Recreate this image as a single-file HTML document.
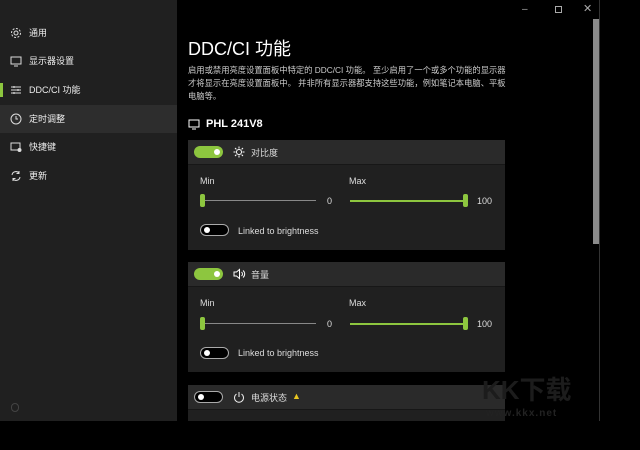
<!DOCTYPE html>
<html><head><meta charset="utf-8"><style>
*{margin:0;padding:0;box-sizing:border-box}
body{width:640px;height:450px;background:#000;position:relative;overflow:hidden;font-family:"Liberation Sans","Noto Sans CJK SC",sans-serif;color:#fff}
.a{position:absolute}
#side{left:0;top:0;width:177px;height:421px;background:#202020}
.it{position:absolute;left:0;width:177px;height:28px;font-size:9px;color:#eee;line-height:28px;padding-left:29px}
.it svg{position:absolute;left:10px;top:8px}
#main{left:177px;top:0;width:423px;height:421px;background:#000;border-right:1px solid #333}
.card{position:absolute;left:188px;width:317px;background:#202020}
.hd{height:25px;background:#2a2a2a;border-bottom:1px solid #171717;position:relative}
.tg{position:absolute;width:29px;height:12px;border-radius:6px}
.on{background:#8dc63f}
.on:after{content:"";position:absolute;right:3px;top:3px;width:6px;height:6px;border-radius:50%;background:#fff}
.off{border:1px solid #aaa;background:#000}
.off:after{content:"";position:absolute;left:3px;top:2px;width:6px;height:6px;border-radius:50%;background:#fff}
.lbl{position:absolute;font-size:9px;color:#ddd}
.tr{position:absolute;height:1px;background:#888}
.trg{position:absolute;height:2px;background:#8dc63f}
.th{position:absolute;width:5px;height:13px;border-radius:2px;background:#8dc63f}
</style></head><body>
<div class="a" id="side">
<div class="it" style="top:19px"><svg width="12" height="12" viewBox="0 0 12 12"><circle cx="6" cy="6" r="2" fill="none" stroke="#ddd"/><circle cx="6" cy="6" r="4.5" fill="none" stroke="#ddd" stroke-dasharray="2 1.5"/></svg>通用</div>
<div class="it" style="top:47px"><svg width="12" height="12" viewBox="0 0 12 12"><rect x="1" y="2" width="10" height="7" fill="none" stroke="#ddd"/><path d="M4 11h4" stroke="#ddd"/></svg>显示器设置</div>
<div class="a" style="left:0;top:83px;width:3px;height:14px;background:#8dc63f"></div>
<div class="it" style="top:76px"><svg width="12" height="12" viewBox="0 0 12 12"><path d="M1 3h10M1 6h10M1 9h10" stroke="#ddd"/><path d="M4 2v2M8 5v2M4 8v2" stroke="#ddd"/></svg>DDC/CI 功能</div>
<div class="it" style="top:105px;background:#2d2d2d"><svg width="12" height="12" viewBox="0 0 12 12"><circle cx="6" cy="6" r="5" fill="none" stroke="#ddd"/><path d="M6 3v3h2" fill="none" stroke="#ddd"/></svg>定时调整</div>
<div class="it" style="top:133px"><svg width="12" height="12" viewBox="0 0 12 12"><rect x="1" y="2" width="9" height="7" fill="none" stroke="#ddd"/><circle cx="9.5" cy="9" r="2" fill="#ddd"/></svg>快捷键</div>
<div class="it" style="top:162px"><svg width="12" height="12" viewBox="0 0 12 12"><path d="M2 5a4 4 0 0 1 7-2M10 7a4 4 0 0 1-7 2" fill="none" stroke="#ddd"/><path d="M9 1v2.5H6.5M3 11V8.5h2.5" fill="none" stroke="#ddd"/></svg>更新</div>
<div class="a" style="left:11px;top:403px;width:8px;height:9px;border:1px solid #444;border-radius:4px"></div>
</div>
<div class="a" id="main"></div>
<div class="a" style="left:522px;top:4px;font-size:10px;color:#aaa">–</div>
<div class="a" style="left:555px;top:6px;width:7px;height:7px;border:1px solid #aaa"></div>
<div class="a" style="left:583px;top:2px;font-size:11px;color:#aaa">✕</div>
<div class="a" style="left:593px;top:19px;width:6px;height:225px;background:#8a8a8a"></div>
<div class="a" style="left:188px;top:35px;font-size:18px">DDC/CI 功能</div>
<div class="a" style="left:188px;top:64px;width:320px;font-size:8.3px;line-height:13px;color:#ccc">启用或禁用亮度设置面板中特定的 DDC/CI 功能。 至少启用了一个或多个功能的显示器才将显示在亮度设置面板中。 并非所有显示器都支持这些功能，例如笔记本电脑、平板电脑等。</div>
<svg class="a" style="left:188px;top:119px" width="12" height="11" viewBox="0 0 12 11"><rect x="1" y="1" width="10" height="7" fill="none" stroke="#fff"/><path d="M4 10h4" stroke="#fff"/></svg>
<div class="a" style="left:206px;top:118px;font-size:11px;font-weight:bold">PHL 241V8</div>

<div class="card" style="top:140px;height:110px">
<div class="hd"><div class="tg on" style="left:6px;top:6px"></div><svg class="a" style="left:45px;top:6px" width="12" height="12" viewBox="0 0 12 12"><circle cx="6" cy="6" r="2.5" fill="none" stroke="#fff"/><path d="M6 0.5v2M6 9.5v2M0.5 6h2M9.5 6h2M2 2l1.4 1.4M8.6 8.6L10 10M2 10l1.4-1.4M8.6 3.4L10 2" stroke="#fff"/></svg><div class="lbl" style="left:63px;top:6px">对比度</div></div>
<div class="lbl" style="left:12px;top:36px">Min</div><div class="lbl" style="left:161px;top:36px">Max</div>
<div class="tr" style="left:16px;top:60px;width:112px"></div><div class="th" style="left:12px;top:54px"></div><div class="lbl" style="left:139px;top:56px">0</div>
<div class="trg" style="left:162px;top:60px;width:115px"></div><div class="th" style="left:275px;top:54px"></div><div class="lbl" style="left:289px;top:56px">100</div>
<div class="tg off" style="left:12px;top:84px"></div><div class="lbl" style="left:50px;top:86px">Linked to brightness</div>
</div>

<div class="card" style="top:262px;height:110px">
<div class="hd"><div class="tg on" style="left:6px;top:6px"></div><svg class="a" style="left:45px;top:6px" width="13" height="12" viewBox="0 0 13 12"><path d="M1 4h2.5L6.5 1.5v9L3.5 8H1z" fill="none" stroke="#fff"/><path d="M8.5 4a2.5 2.5 0 0 1 0 4M10 2.5a4.5 4.5 0 0 1 0 7" fill="none" stroke="#fff"/></svg><div class="lbl" style="left:63px;top:6px">音量</div></div>
<div class="lbl" style="left:12px;top:36px">Min</div><div class="lbl" style="left:161px;top:36px">Max</div>
<div class="tr" style="left:16px;top:61px;width:112px"></div><div class="th" style="left:12px;top:55px"></div><div class="lbl" style="left:139px;top:57px">0</div>
<div class="trg" style="left:162px;top:61px;width:115px"></div><div class="th" style="left:275px;top:55px"></div><div class="lbl" style="left:289px;top:57px">100</div>
<div class="tg off" style="left:12px;top:85px"></div><div class="lbl" style="left:50px;top:86px">Linked to brightness</div>
</div>

<div class="card" style="top:385px;height:36px">
<div class="hd"><div class="tg off" style="left:6px;top:6px"></div>
<svg class="a" style="left:45px;top:6px" width="12" height="12" viewBox="0 0 12 12"><path d="M3.5 3a4.5 4.5 0 1 0 5 0" fill="none" stroke="#eee"/><path d="M6 1v5" stroke="#eee"/></svg>
<div class="lbl" style="left:63px;top:6px">电源状态</div><div class="lbl" style="left:104px;top:6px;color:#e8c620">▲</div></div>
</div>
<div class="a" style="left:482px;top:370px;font-size:26px;font-weight:bold;color:#1c1c1c">KK下载</div>
<div class="a" style="left:486px;top:408px;font-size:10px;font-weight:bold;color:#222;letter-spacing:1px">www.kkx.net</div>
</body></html>
